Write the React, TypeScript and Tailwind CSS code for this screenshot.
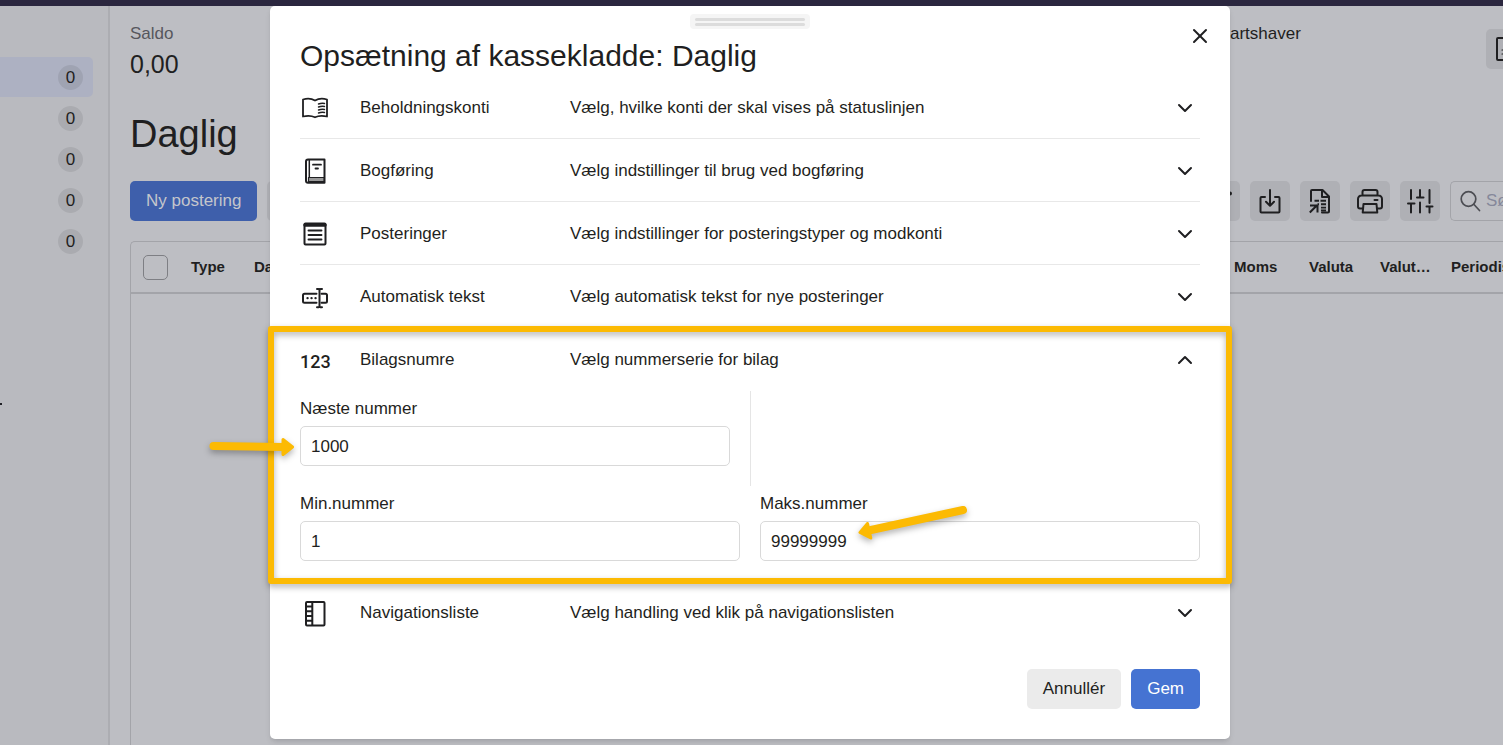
import type { ReactNode } from "react";
import { ChevronDown, ChevronUp, X } from "lucide-react";

const strokeProps = {
  fill: "none",
  stroke: "currentColor",
  strokeWidth: 2,
  strokeLinecap: "round" as const,
  strokeLinejoin: "round" as const,
};

function Icon({ children }: { children: ReactNode }) {
  return (
    <svg width="30" height="30" viewBox="0 0 30 30" aria-hidden="true" {...strokeProps}>
      {children}
    </svg>
  );
}

const OpenBookIcon = () => (
  <Icon>
    <path d="M3 6.500c4-1.200 8.500-1 12 1c3.500-2 8-2.200 12-1v17c-4-1-8.500-1-12 .8c-3.500-1.800-8-1.800-12-.8z" strokeWidth="1.800" />
    <path d="M18.500 11c2-.8 4-.9 6-.6M18.500 14c2-.8 4-.9 6-.6M18.500 17c2-.8 4-.9 6-.6M18.500 20c2-.8 4-.9 6-.6" strokeWidth="1.500" />
  </Icon>
);

const LedgerIcon = () => (
  <Icon>
    <path d="M8 3.500h16.500v23.300H8a2 2 0 0 1-2-2V5.500a2 2 0 0 1 2-2z" />
    <path d="M9.300 4v17" strokeWidth="1.500" />
    <path d="M13 8.700h8M15.500 12.500h2.500" strokeWidth="1.800" />
    <path d="M8.500 21.500h15.500v4H8.500z" fill="#999" strokeWidth="1.200" />
  </Icon>
);

const NoteIcon = () => (
  <Icon>
    <rect x="4.500" y="4.500" width="21" height="21" rx="1" />
    <path d="M5 6h20" strokeWidth="3.500" />
    <path d="M8.500 11.500h13M8.500 16h13M8.500 20.500h13" strokeWidth="1.900" />
  </Icon>
);

const TextCursorIcon = () => (
  <Icon>
    <path d="M16.500 11.700H4.500a1.500 1.500 0 0 0-1.500 1.500v6a1.500 1.500 0 0 0 1.500 1.500h12M21.500 11.700h4a1.500 1.500 0 0 1 1.500 1.500v6a1.500 1.500 0 0 1-1.500 1.500h-4" />
    <path d="M19.500 8v16.500M17 7h1.500l1 .8l1-.8H22M17 25.300h1.500l1-.8l1 .8H22" />
    <path d="M7.500 16.200h.1M11.500 16.200h.1M15.500 16.200h.1" strokeWidth="2.300" />
  </Icon>
);

const NavListIcon = () => (
  <Icon>
    <rect x="6" y="4" width="18.500" height="23.500" rx="1" />
    <path d="M12.300 4.500v22.500M6.500 8.500h5.500M6.500 13.200h5.500M6.500 18h5.500M6.500 22.800h5.500" />
  </Icon>
);

const NumbersIcon = () => (
  <span className="pt-1 font-['Roboto',sans-serif] text-[18px] font-medium leading-6">123</span>
);

const DownloadIcon = () => (
  <Icon>
    <path d="M10 11H6.500a1 1 0 0 0-1 1v13.500a1 1 0 0 0 1 1h17a1 1 0 0 0 1-1V12a1 1 0 0 0-1-1H20M15 4v15.500M11 15.800l4 4l4-4" />
  </Icon>
);

const ReportIcon = () => (
  <Icon>
    <path d="M6 15V5a1 1 0 0 1 1-1h10.500l6.500 6.500v15a1 1 0 0 1-1 1h-6M17 4.500v6.500H23.500" />
    <path d="M4.800 26.500l7.500-7.500M5 19.500h7.500v7" strokeLinecap="butt" />
    <path d="M9.500 14.800h4.500M15.500 14.800h5.500M16 18.300h5M16 21.600h5M12.500 18.300h1.500M16 24.500h5" strokeLinecap="butt" strokeWidth="1.900" />
  </Icon>
);

const PrinterIcon = () => (
  <Icon>
    <path d="M7.500 9.500V6a2 2 0 0 1 2-2h11a2 2 0 0 1 2 2v3.500M8 22.500H5a2 2 0 0 1-2-2V13a3.500 3.500 0 0 1 3.500-3.500h17A3.500 3.500 0 0 1 27 13v7.500a2 2 0 0 1-2 2h-3M19.500 14h3" />
    <path d="M8.500 18h13l.8 8.500H7.700z" />
  </Icon>
);

const SlidersIcon = () => (
  <Icon>
    <path d="M6 4v9M6 18v8.500M3 17.500h6.500M15 4v7M15 16.500v10M12 11.500h6.500M24.500 4v13M24.500 21v5.500M21.500 20.500h6" />
  </Icon>
);

const DocumentIcon = () => (
  <Icon>
    <rect x="6" y="4" width="18" height="22" rx="1" />
    <path d="M11 16h2M11 20h2" strokeWidth="1.200" />
  </Icon>
);

const sections = [
  { title: "Beholdningskonti", text: "Vælg, hvilke konti der skal vises på statuslinjen", icon: <OpenBookIcon /> },
  { title: "Bogføring", text: "Vælg indstillinger til brug ved bogføring", icon: <LedgerIcon /> },
  { title: "Posteringer", text: "Vælg indstillinger for posteringstyper og modkonti", icon: <NoteIcon /> },
  { title: "Automatisk tekst", text: "Vælg automatisk tekst for nye posteringer", icon: <TextCursorIcon /> },
];

function SectionHeader({
  title,
  text,
  icon,
  open = false,
}: {
  title: string;
  text: string;
  icon: ReactNode;
  open?: boolean;
}) {
  return (
    <button type="button" aria-expanded={open} className="flex h-[62px] w-full items-center pt-0.5 text-left">
      <span className="flex w-[60px] shrink-0 items-center">{icon}</span>
      <span className="w-[210px] shrink-0">{title}</span>
      <span className="flex-1">{text}</span>
      <span className="pr-[3px]">
        {open ? <ChevronUp size={24} strokeWidth={2} /> : <ChevronDown size={24} strokeWidth={2} />}
      </span>
    </button>
  );
}

function Field({ id, label, value }: { id: string; label: string; value: string }) {
  return (
    <div className="flex flex-1 flex-col gap-[5px] pb-5 pt-1.5">
      <label htmlFor={id} className="leading-6">
        {label}
      </label>
      <input
        id={id}
        type="text"
        defaultValue={value}
        className="h-10 w-full rounded-[5px] border border-[#d9d9d9] bg-white px-2.5 pt-0.5 outline-none"
      />
    </div>
  );
}

function Highlight() {
  return (
    <div className="pointer-events-none absolute -inset-x-8 -bottom-[3px] -top-0.5" aria-hidden="true">
      <div className="h-full rounded-[3px] border-6 border-[#fcba03] drop-shadow-[0_3px_3px_rgba(0,0,0,0.3)]" />
      <svg
        className="absolute -left-[60px] top-[108px] drop-shadow-[0_3px_3px_rgba(0,0,0,0.3)]"
        width="90"
        height="26"
        viewBox="0 0 90 26"
      >
        <path d="M5.500 12L76 13" stroke="#fcba03" strokeWidth="8" strokeLinecap="round" />
        <path d="M75 5.500L84.500 13L75 20.500z" fill="#fcba03" stroke="#fcba03" strokeWidth="3" strokeLinejoin="round" />
      </svg>
      <svg
        className="absolute left-[584px] top-[174px] drop-shadow-[0_3px_3px_rgba(0,0,0,0.3)]"
        width="124"
        height="50"
        viewBox="0 0 124 50"
      >
        <path d="M111 10L19 30" stroke="#fcba03" strokeWidth="8" strokeLinecap="round" />
        <path d="M15.500 23.500L8 32.500L18.800 38z" fill="#fcba03" stroke="#fcba03" strokeWidth="3" strokeLinejoin="round" />
      </svg>
    </div>
  );
}

function SettingsDialog() {
  return (
    <div className="absolute inset-x-0 top-1.5 flex justify-center pr-[3px]">
      <div
        role="dialog"
        aria-labelledby="dialog-title"
        className="relative w-full max-w-[960px] rounded-[5px] bg-white px-[30px] pb-[30px] pt-8 shadow-md"
      >
        <div className="absolute left-1/2 top-2 flex h-[15px] w-[120px] -translate-x-1/2 flex-col justify-center gap-0.5 rounded bg-[#f5f5f5] px-[5px]">
          <span className="h-[3px] rounded bg-[#dcdcdc]" />
          <span className="h-[3px] rounded bg-[#dcdcdc]" />
        </div>
        <button type="button" aria-label="Luk" className="absolute right-[18px] top-[18px]">
          <X size={24} strokeWidth={2} />
        </button>
        <h1 id="dialog-title" className="text-[30px] leading-9">
          Opsætning af kassekladde: Daglig
        </h1>
        <div className="pt-0.5">
          {sections.map((s) => (
            <div key={s.title} className="border-b border-[#e8e8e8]">
              <SectionHeader {...s} />
            </div>
          ))}
          <div className="relative">
            <SectionHeader title="Bilagsnumre" text="Vælg nummerserie for bilag" icon={<NumbersIcon />} open />
            <div className="pt-px">
              <div className="grid grid-cols-2">
                <div className="flex pr-5">
                  <Field id="next" label="Næste nummer" value="1000" />
                </div>
                <div className="border-l border-[#e5e5e5]" />
              </div>
              <div className="grid grid-cols-2 gap-5">
                <Field id="min" label="Min.nummer" value="1" />
                <Field id="max" label="Maks.nummer" value="99999999" />
              </div>
            </div>
            <Highlight />
          </div>
          <SectionHeader
            title="Navigationsliste"
            text="Vælg handling ved klik på navigationslisten"
            icon={<NavListIcon />}
          />
        </div>
        <div className="flex justify-end gap-2.5 pt-[26px]">
          <button type="button" className="h-10 rounded-[5px] bg-[#ebebeb] px-4">
            Annullér
          </button>
          <button type="button" className="h-10 rounded-[5px] bg-[#4573d2] px-4 text-white">
            Gem
          </button>
        </div>
      </div>
    </div>
  );
}

function ToolButton({ label, children }: { label: string; children: ReactNode }) {
  return (
    <button
      type="button"
      aria-label={label}
      className="flex size-10 shrink-0 items-center justify-center rounded-[5px] bg-[#afb0b5]"
    >
      {children}
    </button>
  );
}

function Sidebar() {
  return (
    <nav className="flex w-[110px] shrink-0 flex-col border-r-2 border-[#acadb2] bg-[#b9babf] pt-[51px]">
      {[0, 1, 2, 3, 4].map((row) => (
        <a
          key={row}
          href="#"
          className={
            row === 0
              ? "mb-px mr-[15px] flex h-10 items-center justify-end rounded-r-[5px] bg-[#adb1c2] pr-2.5"
              : "mb-px mr-[15px] flex h-10 items-center justify-end pr-2.5"
          }
        >
          <span className="flex size-[25px] items-center justify-center rounded-full bg-[#000]/8 pt-px">0</span>
        </a>
      ))}
      <span className="mt-[141px] size-0.5 bg-[#1f2025]" />
    </nav>
  );
}

function JournalPage() {
  return (
    <main className="flex min-w-0 flex-1 flex-col pl-5">
      <div className="flex h-[79px] items-start pt-4">
        <div className="flex-1">
          <div className="leading-6 text-[#56575d]">Saldo</div>
          <div className="text-[25px] leading-9">0,00</div>
        </div>
        <div className="w-[256px] leading-6">artshaver</div>
        <div className="w-[17px] overflow-hidden pt-[7px]">
          <ToolButton label="Dokument">
            <DocumentIcon />
          </ToolButton>
        </div>
      </div>
      <h2 className="pt-[26px] text-[38px] leading-[46px]">Daglig</h2>
      <div className="flex gap-2.5 pt-6">
        <button type="button" className="h-10 rounded-[5px] bg-[#3e5fab] px-4 text-[#c4c6cc]">
          Ny postering
        </button>
        <ToolButton label="Flere">{null}</ToolButton>
        <div className="flex-1" />
        <ToolButton label="Rediger">
          <svg width="40" height="40" viewBox="0 0 40 40" aria-hidden="true">
            <circle cx="30" cy="12.500" r="2" fill="currentColor" />
          </svg>
        </ToolButton>
        <ToolButton label="Importer">
          <DownloadIcon />
        </ToolButton>
        <ToolButton label="Rapport">
          <ReportIcon />
        </ToolButton>
        <ToolButton label="Udskriv">
          <PrinterIcon />
        </ToolButton>
        <ToolButton label="Indstillinger">
          <SlidersIcon />
        </ToolButton>
        <div className="flex h-10 w-[53px] shrink-0 items-center gap-px overflow-hidden rounded-l-[5px] border border-r-0 border-[#a3a4a9] pl-1">
          <svg width="30" height="30" viewBox="0 0 30 30" className="shrink-0 text-[#4c4d53]" aria-hidden="true" {...strokeProps}>
            <circle cx="13.500" cy="13" r="7.300" strokeWidth="1.700" />
            <path d="M19 18.500l5.500 6" strokeWidth="1.700" />
          </svg>
          <input
            type="text"
            aria-label="Søg"
            placeholder="Søg"
            className="w-20 shrink-0 bg-transparent outline-none placeholder:text-[#85889a]"
          />
        </div>
      </div>
      <div className="mt-5 flex-1 rounded-tl-[5px] border-l border-t border-[#a3a4a9]">
        <table className="w-full table-fixed text-left text-[15px] font-bold">
          <thead>
            <tr className="h-[51px] border-b-2 border-[#a3a4a9]">
              <th className="w-[50px] pl-3">
                <input
                  type="checkbox"
                  aria-label="Vælg alle"
                  className="block size-[25px] appearance-none rounded-[5px] border border-[#7e7f84]"
                />
              </th>
              <th className="w-[63px] pl-2.5">Type</th>
              <th className="pl-2.5">Dato</th>
              <th className="w-[75px] pl-2.5">Moms</th>
              <th className="w-[71px] pl-2.5">Valuta</th>
              <th className="w-[71px] pl-2.5">Valut…</th>
              <th className="w-[62px] overflow-hidden whitespace-nowrap pl-2.5">Periodisering</th>
            </tr>
          </thead>
        </table>
      </div>
    </main>
  );
}

export default function App() {
  return (
    <div className="relative flex h-screen flex-col overflow-hidden bg-[#bdbec3] font-['Liberation_Sans',Arial,sans-serif] text-[17px] leading-6 text-[#1f1f21]">
      <header className="h-1.5 shrink-0 bg-[#2b273f]" />
      <div className="flex min-h-0 flex-1">
        <Sidebar />
        <JournalPage />
      </div>
      <SettingsDialog />
    </div>
  );
}
